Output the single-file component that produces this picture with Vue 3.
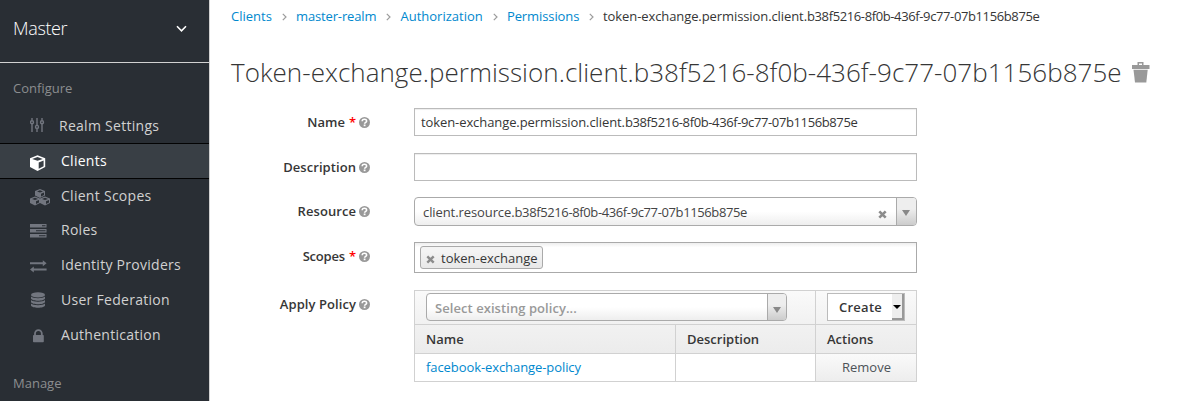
<script setup>
const nav = [
  { label: 'Realm Settings', icon: 'sliders' },
  { label: 'Clients', icon: 'cube', active: true },
  { label: 'Client Scopes', icon: 'cubes' },
  { label: 'Roles', icon: 'tasks' },
  { label: 'Identity Providers', icon: 'exchange' },
  { label: 'User Federation', icon: 'database' },
  { label: 'Authentication', icon: 'lock' },
]
const crumbs = ['Clients', 'master-realm', 'Authorization', 'Permissions']
const prefix = 'token-exchange.permission.client.'
const uuid = 'b38f5216-8f0b-436f-9c77-07b1156b875e'
const rows = [
  { key: 'name', label: 'Name', required: true },
  { key: 'description', label: 'Description' },
  { key: 'resource', label: 'Resource' },
  { key: 'scopes', label: 'Scopes', required: true },
  { key: 'policy', label: 'Apply Policy' },
]
</script>

<template>
  <div class="page">
    <aside class="sidebar">
      <div class="realm">
        <span>Master</span>
        <svg width="11" height="8" viewBox="0 0 11 8"><path d="M1 1.3 5.5 5.8 10 1.3" fill="none" stroke="#fff" stroke-width="1.6" /></svg>
      </div>
      <h2 class="group">Configure</h2>
      <nav>
        <a v-for="n in nav" :key="n.label" class="item" :class="[n.icon, { active: n.active }]">
          <svg v-if="n.icon === 'sliders'" class="ico" width="20" height="16" viewBox="0 0 20 16">
            <g fill="none" stroke="currentColor" stroke-width="1.4">
              <path d="M2 1v2.6M2 7v8M7 1v7.2M7 11.6V15M12 1v2.6M12 7v8" />
              <circle cx="2" cy="5.3" r="1.5" /><circle cx="7" cy="9.9" r="1.5" /><circle cx="12" cy="5.3" r="1.5" />
            </g>
          </svg>
          <svg v-else-if="n.icon === 'cube'" class="ico" width="20" height="16" viewBox="0 0 20 16">
            <path d="M7.5.3 15.200 3.200V12L7.5 15.900 0 12V3.200z" fill="currentColor" />
            <path d="M7.5 2 12.800 3.900 7.5 5.800 2.200 3.900zM8.700 7.500l4.900-1.900v5.700l-4.900 2.500z" fill="#393f45" />
          </svg>
          <svg v-else-if="n.icon === 'cubes'" class="ico" width="20" height="17" viewBox="0 0 20 17">
            <g v-for="(p, i) in [[5, 0], [0, 7.5], [10, 7.5]]" :key="i" :transform="`translate(${p[0]} ${p[1]})`">
              <path d="M5 0l5 2v4.5L5 9 0 6.5V2z" fill="currentColor" />
              <path d="M5 1.2 8 2.4 5 3.6 2 2.4zM6 4.8l3-1.2v2.3L6 7.4z" fill="#292e34" />
            </g>
          </svg>
          <svg v-else-if="n.icon === 'tasks'" class="ico" width="20" height="14" viewBox="0 0 20 14">
            <path d="M0 0h16.500v3.500H0zM0 5h16.500v3.500H0zM0 10h16.500v3.500H0z" fill="currentColor" />
            <path d="M12 1.200h3.500v1.100H12zM6 6.200h9.500v1.100H6zM9 11.200h6.500v1.100H9z" fill="#292e34" />
          </svg>
          <svg v-else-if="n.icon === 'exchange'" class="ico" width="20" height="13" viewBox="0 0 20 13">
            <path d="M0 2.200h12.800V.200L16.600 3.200 12.800 6.200V4.200H0zM16.600 8.500H3.800V6.500L0 9.500l3.800 3v-2h12.800z" fill="currentColor" />
          </svg>
          <svg v-else-if="n.icon === 'database'" class="ico" width="20" height="17" viewBox="0 0 20 17">
            <ellipse cx="8" cy="2.9" rx="7" ry="2.6" fill="currentColor" />
            <path v-for="y in [4.6, 8, 11.4]" :key="y" :d="`M1 ${y}c2 2.300 12 2.300 14 0v2c-1 3-13 3-14 0z`" fill="currentColor" />
          </svg>
          <svg v-else class="ico" width="20" height="14" viewBox="0 0 20 14">
            <path d="M5 6.500V4.500a3.400 3.400 0 0 1 6.800 0v2" fill="none" stroke="currentColor" stroke-width="1.800" />
            <rect x="3" y="6" width="10.800" height="7.300" rx=".8" fill="currentColor" />
          </svg>
          <span class="label">{{ n.label }}</span>
        </a>
      </nav>
      <h2 class="group manage">Manage</h2>
    </aside>

    <main>
      <div class="crumbs">
        <template v-for="c in crumbs" :key="c">
          <a :class="c">{{ c }}</a>
          <svg width="5" height="8" viewBox="0 0 5 8"><path d="M.8.8 4 4 .8 7.200" fill="none" stroke="#9c9c9c" stroke-width="1.200" /></svg>
        </template>
        <span><span class="prefix">{{ prefix }}</span><span class="uuid">{{ uuid }}</span></span>
      </div>
      <h1>
        <span>T{{ prefix.slice(1) }}{{ uuid }}</span>
        <svg width="18" height="21" viewBox="0 0 18 21">
          <path d="M0 3h5.500V0h6v3H17.500v4H0zM7 1.500V3h3V1.500z" fill="#999" fill-rule="evenodd" />
          <path d="M1.500 7.800h14.200L14.300 20.500H3z" fill="#999" />
        </svg>
      </h1>

      <div v-for="r in rows" :key="r.key" class="row" :class="r.key">
        <label>
          <span class="txt">{{ r.label }}</span>
          <span v-if="r.required" class="req">*</span>
          <svg width="11" height="11" viewBox="0 0 11 11">
            <circle cx="5.500" cy="5.500" r="5.500" fill="#999" />
            <path d="M3.200 4.200C3.200 1.500 7.700 1.600 7.600 4.200 7.500 5.400 5.600 5.300 5.600 6.800" fill="none" stroke="#fff" stroke-width="1.600" />
            <rect x="4.700" y="7.500" width="1.800" height="1.700" fill="#fff" />
          </svg>
        </label>

        <div v-if="r.key === 'name'" class="input"><span class="prefix">{{ prefix }}</span><span class="uuid">{{ uuid }}</span></div>
        <div v-else-if="r.key === 'description'" class="input"></div>
        <div v-else-if="r.key === 'resource'" class="select">
          <span class="value"><span class="prefix">client.resource.</span><span class="uuid">{{ uuid }}</span></span>
          <svg class="x" width="9" height="9" viewBox="0 0 9 9"><path d="M1.300 1.300l6.400 6.400M7.700 1.300 1.300 7.700" stroke="#8c8c8c" stroke-width="2.600" /></svg>
          <span class="arrow"><i></i></span>
        </div>
        <div v-else-if="r.key === 'scopes'" class="multi">
          <span class="tag">
            <svg width="9" height="9" viewBox="0 0 9 9"><path d="M1.300 1.300l6.400 6.400M7.700 1.300 1.300 7.700" stroke="#8c8c8c" stroke-width="2.400" /></svg>
            <span>token-exchange</span>
          </span>
        </div>
        <div v-else class="table">
          <div class="cell tools wide">
            <div class="select">
              <span class="value">Select existing policy...</span>
              <span class="arrow"><i></i></span>
            </div>
          </div>
          <div class="cell tools"><div class="create"><span>Create</span><b><i></i></b></div></div>
          <div class="cell head"><span>Name</span></div>
          <div class="cell head"><span>Description</span></div>
          <div class="cell head"><span>Actions</span></div>
          <div class="cell body"><a class="policy-link">facebook-exchange-policy</a></div>
          <div class="cell body"></div>
          <div class="cell body remove"><span>Remove</span></div>
        </div>
      </div>
    </main>
  </div>
</template>

<style>
body { margin: 0; overflow: hidden; background: #fff; }
</style>

<style scoped>
* { box-sizing: border-box; }
svg { display: block; flex: none; }
.page { display: flex; width: 1179px; height: 401px; overflow: hidden; font: 13px/20px "Open Sans", sans-serif; color: #363636; white-space: nowrap; }
.prefix { letter-spacing: -.09px; }
.uuid { letter-spacing: -.38px; }
.sidebar { flex: none; width: 210px; background: #292e34; border-right: 1px solid #d1d1d1; }
.realm { display: flex; justify-content: space-between; align-items: center; height: 63px; padding: 0 22px 5px 13px; border-bottom: 1px solid #d1d1d1; font-size: 18px; font-weight: 300; letter-spacing: -.35px; color: #fff; }
.realm span { margin-top: -2px; }
.group { margin: 15px 0 10px; padding-left: 13px; font-size: 13px; font-weight: 400; line-height: 20px; color: #8b8d8f; }
.group.manage { margin-top: 21px; }
nav { display: flex; flex-direction: column; }
.item { display: flex; align-items: center; height: 34.75px; padding-left: 30px; font-size: 14px; color: #d1d1d1; }
.item .ico { width: 20px; color: #72767f; margin-top: 2px; }
.item .label { margin-left: 11px; letter-spacing: .28px; }
.item.sliders { height: 35px; padding-top: 1px; }
.item.sliders .label { margin-left: 9px; }
.item.sliders .ico { margin-top: -2px; }
.item.active { height: 36px; margin-bottom: -.8px; background: #393f45; border: solid #030303; border-width: 1px 0; color: #fff; }
.item.active .ico { color: #fff; margin-top: 4px; }
.item.cubes .ico { margin-top: 3px; }
.item.lock .ico, .item.exchange .ico { margin-top: 3px; }
main { flex: 1; min-width: 0; padding-left: 21px; }
.crumbs { display: flex; align-items: center; height: 32px; }
.crumbs a { color: #0088ce; }
.crumbs a.master-realm { letter-spacing: -.15px; }
.crumbs a.Permissions { letter-spacing: -.09px; }
.crumbs svg { margin: 2px 9px 0 10.2px; }
.crumbs a.Permissions + svg { margin-left: 9.7px; }
h1 { display: flex; align-items: center; gap: 10px; height: 40px; margin: 20px 0 16px; font-size: 26px; font-weight: 300; line-height: 40px; letter-spacing: .03px; }
.row { display: flex; width: 686px; }
label { display: flex; justify-content: flex-end; align-items: center; width: 139px; height: 28px; margin-right: 44px; font-weight: 600; }
label svg { margin-left: 3px; }
.description .txt, .resource .txt, .policy .txt { letter-spacing: .07px; }
.scopes .txt { letter-spacing: -.2px; }
.req { color: #f00; margin-left: 4px; }
.input { width: 503px; height: 28px; padding: 3px 6px; border: 1px solid #bbb; box-shadow: inset 0 1px 1px rgba(3, 3, 3, .075); }
.name { height: 45px; }
.description { height: 44px; }
.resource { height: 45px; }
.scopes { height: 48px; }
.select { display: flex; width: 503px; height: 29px; padding-left: 8px; border: 1px solid #aaa; border-radius: 4px; background: linear-gradient(#fff 50%, #eee); line-height: 29px; color: #444; }
.select .value { flex: 1; }
.select .x { margin: 12px 9px 0 0; }
.arrow { width: 20px; padding: 12px 0 0 5px; border-left: 1px solid #aaa; border-radius: 0 3px 3px 0; background: linear-gradient(#eee 40%, #ccc); }
.arrow i { display: block; width: 0; border: solid transparent; border-width: 6px 4px 0; border-top-color: #888; }
.multi { width: 503px; height: 31px; padding: 3px 5px; border: 1px solid #aaa; background: linear-gradient(#eee, #fff 15%); }
.tag { display: flex; align-items: center; width: 123px; height: 23px; padding-left: 5px; border: 1px solid #aaa; border-radius: 3px; background: linear-gradient(#f4f4f4 20%, #e8e8e8); }
.tag svg { margin: 3px 6px 0 0; }
.table { display: grid; grid-template-columns: 261px 140px 101px; grid-template-rows: 34px 29px 28px; width: 503px; height: 92px; border: solid #d1d1d1; border-width: 1px 0 0 1px; }
.cell { display: flex; align-items: center; padding-left: 11px; border: solid #d1d1d1; border-width: 0 1px 1px 0; }
.cell a { color: #0088ce; letter-spacing: -.08px; }
.wide { grid-column: span 2; }
.cell.tools { align-items: flex-start; padding-top: 2px; background: linear-gradient(#fafafa, #f1f1f1); }
.cell .select { width: 361px; height: 28px; color: #999; font-weight: 600; letter-spacing: .06px; }
.cell .arrow { width: 19px; padding-top: 13px; }
.head { font-weight: 600; background: linear-gradient(#f1f1f1, #ececec); }
.cell.body { padding-bottom: 2px; }
.create { display: flex; width: 78px; height: 28px; border: 1px solid #bbb; background: #fff; font-weight: 600; line-height: 27px; letter-spacing: .25px; }
.create span { width: 64px; padding-left: 11px; }
.create b { width: 12px; padding: 11px 0 0 1px; background: #eee; border: solid #999; border-width: 0 2px 2px 0; }
.create i { display: block; width: 0; border: solid transparent; border-width: 4px 4px 0; border-top-color: #000; }
.cell.remove { justify-content: center; padding-left: 1px; background: linear-gradient(#fafafa, #ededed); color: #4d5258; }
</style>
